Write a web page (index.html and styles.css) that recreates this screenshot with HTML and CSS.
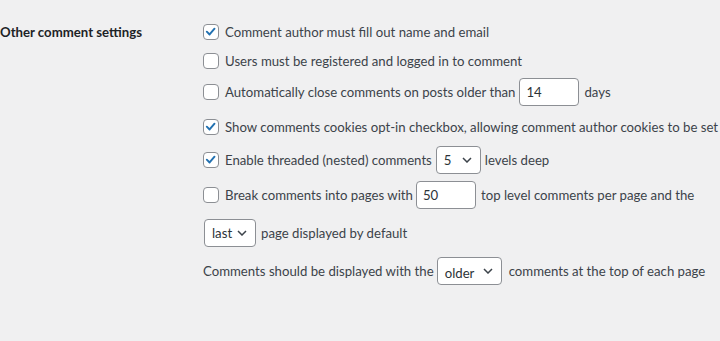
FILE: index.html
```html
<!DOCTYPE html>
<html lang="en">
<head>
<meta charset="utf-8">
<title>Discussion Settings</title>
<link rel="stylesheet" href="styles.css">
</head>
<body>
<div class="page">
  <div class="th">Other comment settings</div>
  <div class="td">
    <label class="row r1"><span class="cb"><svg viewBox="0 0 16 16" width="14" height="14"><path d="M3.2 7.6 L6.4 10.8 L12 4.2" fill="none" stroke="#2271b1" stroke-width="2.2" stroke-linecap="round" stroke-linejoin="round"/></svg></span>Comment author must fill out name and email</label>
    <label class="row r2"><span class="cb"></span>Users must be registered and logged in to comment</label>
    <label class="row r3"><span class="cb"></span>Automatically close comments on posts older than<span class="num gap-l4">14</span>days</label>
    <label class="row r4"><span class="cb"><svg viewBox="0 0 16 16" width="14" height="14"><path d="M3.2 7.6 L6.4 10.8 L12 4.2" fill="none" stroke="#2271b1" stroke-width="2.2" stroke-linecap="round" stroke-linejoin="round"/></svg></span>Show comments cookies opt-in checkbox, allowing comment author cookies to be set</label>
    <label class="row r5"><span class="cb"><svg viewBox="0 0 16 16" width="14" height="14"><path d="M3.2 7.6 L6.4 10.8 L12 4.2" fill="none" stroke="#2271b1" stroke-width="2.2" stroke-linecap="round" stroke-linejoin="round"/></svg></span>Enable threaded (nested) comments<span class="sel w45 gap-l4"><span>5</span><svg viewBox="0 0 10 6" width="10" height="6"><path d="M1 1 L5 5 L9 1" fill="none" stroke="#3c434a" stroke-width="1.5"/></svg></span>levels deep</label>
    <label class="row r6"><span class="cb"></span>Break comments into pages with<span class="num gap-l3">50</span>top level comments per page and the</label>
    <div class="row r7"><span class="sel w52 flush"><span>last</span><svg viewBox="0 0 10 6" width="10" height="6"><path d="M1 1 L5 5 L9 1" fill="none" stroke="#3c434a" stroke-width="1.5"/></svg></span>page displayed by default</div>
    <div class="row r8">Comments should be displayed with the<span class="sel w65 wide"><span>older</span><svg viewBox="0 0 10 6" width="10" height="6"><path d="M1 1 L5 5 L9 1" fill="none" stroke="#3c434a" stroke-width="1.5"/></svg></span>comments at the top of each page</div>
  </div>
</div>
</body>
</html>
```

FILE: styles.css
```css
html, body {
  margin: 0;
  background: #f0f0f1;
}
body {
  font-family: Lato, "Noto Sans", sans-serif;
  font-size: 13.2px;
  color: #3c434a;
}
.page {
  display: flex;
  align-items: flex-start;
  padding-top: 18px;
  height: 341px;
  box-sizing: border-box;
}
.th {
  width: 203px;
  flex: none;
  font-weight: 700;
  color: #1d2327;
  line-height: 28px;
}
.td {
  display: flex;
  flex-direction: column;
}
.row {
  display: flex;
  align-items: center;
  height: 28px;
  white-space: nowrap;
}
.r2 { margin-top: 1px; }
.r3 { margin-top: 3px; }
.r4 { margin-top: 7px; }
.r5 { margin-top: 5px; }
.r6 { margin-top: 7px; }
.r7 { margin-top: 10px; }
.r8 { margin-top: 10px; }
.cb {
  width: 16px;
  height: 16px;
  flex: none;
  box-sizing: border-box;
  border: 1px solid #8c8f94;
  border-radius: 4px;
  background: #fff;
  margin-right: 6px;
  display: flex;
  align-items: center;
  justify-content: center;
}
.num {
  width: 60px;
  height: 28px;
  flex: none;
  box-sizing: border-box;
  border: 1px solid #8c8f94;
  border-radius: 4px;
  background: #fff;
  padding: 0 6px;
  margin: 0 5px;
  color: #2c3338;
  display: flex;
  align-items: center;
}
.sel {
  height: 28px;
  flex: none;
  box-sizing: border-box;
  border: 1px solid #8c8f94;
  border-radius: 4px;
  background: #fff;
  padding: 0 8px 0 7px;
  margin: 0 4px 0 5px;
  color: #2c3338;
  display: flex;
  align-items: center;
  justify-content: space-between;
}
.w45 { width: 45px; }
.w52 { width: 52px; }
.w65 { width: 65px; }
.gap-l4 { margin-left: 4px; }
.gap-l3 { margin-left: 3px; }
.flush { margin-left: 1px; margin-right: 5px; }
.wide { margin-left: 3px; margin-right: 7px; }
.wide span { padding-top: 3px; }
```
